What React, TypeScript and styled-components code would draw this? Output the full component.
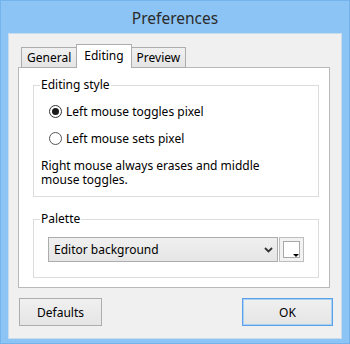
import React from "react";
import styled, { createGlobalStyle } from "styled-components";

const Global = createGlobalStyle`
  html, body { margin: 0; padding: 0; }
  body { font-family: "Noto Sans", "Open Sans", sans-serif; font-size: 12px; color: #000; }
  * { box-sizing: border-box; }
`;

const Frame = styled.div`
  width: 350px;
  height: 344px;
  background: #8cc4f5;
  border: 1px solid #74b3ec;
  display: flex;
  flex-direction: column;
`;

const TitleBar = styled.div`
  height: 33px;
  display: flex;
  align-items: center;
  justify-content: center;
  font-size: 15.5px;
  color: #2b2b2b;
  padding-top: 1px;
`;

const Client = styled.div`
  flex: 1;
  margin: 0 7px 4px 7px;
  background: #f0f0f0;
  border: 1px solid #c9dcee;
  display: flex;
  flex-direction: column;
  padding: 10px 0 12px 0;
`;

const TabRow = styled.div`
  display: flex;
  align-items: flex-end;
  margin-left: 12px;
  height: 24px;
  position: relative;
  z-index: 1;
  margin-bottom: -1px;
`;

const Tab = styled.div<{ $active?: boolean }>`
  height: ${(p) => (p.$active ? "24px" : "21px")};
  padding: 0 ${(p) => (p.$active ? "7px" : "5px")};
  margin-right: -1px;
  border: 1px solid #adadad;
  border-bottom: ${(p) => (p.$active ? "none" : "1px solid #adadad")};
  background: ${(p) =>
    p.$active ? "#ffffff" : "linear-gradient(#f0f0f0, #e5e5e5)"};
  display: flex;
  align-items: ${(p) => (p.$active ? "flex-start" : "center")};
  padding-top: ${(p) => (p.$active ? "2px" : "0")};
  position: relative;
  z-index: ${(p) => (p.$active ? 2 : 1)};
`;

const Pane = styled.div`
  margin: 0 11px 0 9px;
  height: 221px;
  background: #fff;
  border: 1px solid #b9b9b9;
  padding: 9px 10px 0 14px;
  display: flex;
  flex-direction: column;
  gap: 14px;
`;

const Group = styled.fieldset<{ $h: number }>`
  margin: 0;
  border: 1px solid #dcdcdc;
  padding: 0;
  height: ${(p) => p.$h}px;
  display: flex;
  flex-direction: column;
`;

const Legend = styled.legend`
  margin-left: 6px;
  padding: 0 1px;
  line-height: 16px;
`;

const RadioRow = styled.label`
  display: flex;
  align-items: center;
  height: 27px;
  margin-left: 15px;
  gap: 4px;
`;

const RadioCircle = styled.span<{ $checked?: boolean }>`
  width: 13px;
  height: 13px;
  border-radius: 50%;
  border: 1px solid ${(p) => (p.$checked ? "#333" : "#555")};
  background: #fff;
  display: flex;
  align-items: center;
  justify-content: center;
  &::after {
    content: "";
    width: 7px;
    height: 7px;
    border-radius: 50%;
    background: ${(p) => (p.$checked ? "#1a1a1a" : "transparent")};
  }
`;

const Radios = styled.div`
  display: flex;
  flex-direction: column;
  padding-top: 5px;
`;

const Note = styled.p`
  margin: 7px 0 0 7px;
  line-height: 14px;
  width: 260px;
`;

const PaletteRow = styled.div`
  display: flex;
  align-items: center;
  margin: 10px 0 0 14px;
  gap: 1px;
`;

const Combo = styled.div`
  width: 230px;
  height: 25px;
  border: 1px solid #acacac;
  background: linear-gradient(#f0f0f0, #e5e5e5);
  display: flex;
  align-items: center;
  justify-content: space-between;
  padding: 0 4px 0 5px;
`;

const ColorButton = styled.div`
  width: 25px;
  height: 25px;
  border: 1px solid #bdbdbd;
  background: #f2f2f2;
  padding: 3px;
  position: relative;
`;

const Swatch = styled.div`
  width: 100%;
  height: 100%;
  background: #fff;
  border: 1px solid #a8a8a8;
`;

const Caret = styled.div`
  position: absolute;
  right: 4px;
  bottom: 4px;
  width: 0;
  height: 0;
  border-left: 3px solid transparent;
  border-right: 3px solid transparent;
  border-top: 3px solid #000;
`;

const ButtonRow = styled.div`
  display: flex;
  justify-content: space-between;
  margin: 10px 8px 0 10px;
`;

const Button = styled.button<{ $default?: boolean; $w: number }>`
  width: ${(p) => p.$w}px;
  height: 28px;
  font: inherit;
  color: #000;
  background: linear-gradient(#f0f0f0, #e5e5e5);
  border: 1px solid ${(p) => (p.$default ? "#5aa1e8" : "#adadad")};
  box-shadow: ${(p) => (p.$default ? "inset 0 0 0 1px #a9d0f5" : "none")};
  padding: 0;
`;

export default function App() {
  return (
    <>
      <Global />
      <Frame>
        <TitleBar>Preferences</TitleBar>
        <Client>
          <TabRow>
            <Tab>General</Tab>
            <Tab $active>Editing</Tab>
            <Tab>Preview</Tab>
          </TabRow>
          <Pane>
            <Group $h={120}>
              <Legend>Editing style</Legend>
              <Radios>
                <RadioRow>
                  <RadioCircle $checked />
                  Left mouse toggles pixel
                </RadioRow>
                <RadioRow>
                  <RadioCircle />
                  Left mouse sets pixel
                </RadioRow>
              </Radios>
              <Note>Right mouse always erases and middle mouse toggles.</Note>
            </Group>
            <Group $h={67}>
              <Legend>Palette</Legend>
              <PaletteRow>
                <Combo>
                  <span>Editor background</span>
                  <svg width="9" height="6" viewBox="0 0 9 6">
                    <path d="M1 1 L4.5 4.5 L8 1" fill="none" stroke="#333" strokeWidth="1.8" />
                  </svg>
                </Combo>
                <ColorButton>
                  <Swatch />
                  <Caret />
                </ColorButton>
              </PaletteRow>
            </Group>
          </Pane>
          <ButtonRow>
            <Button $w={83}>Defaults</Button>
            <Button $w={91} $default>OK</Button>
          </ButtonRow>
        </Client>
      </Frame>
    </>
  );
}
